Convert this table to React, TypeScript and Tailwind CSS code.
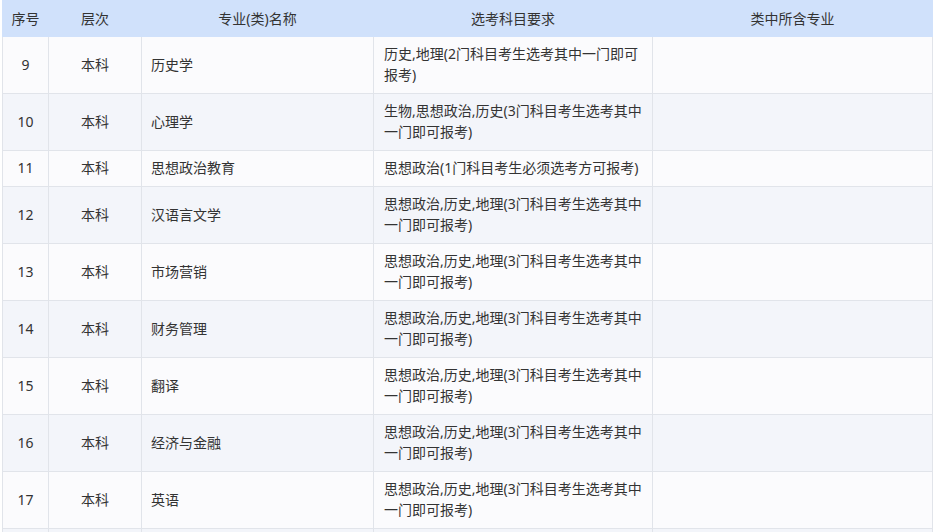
const rows = [
  { no: 9, name: '历史学', req: '历史,地理(2门科目考生选考其中一门即可报考)' },
  { no: 10, name: '心理学', req: '生物,思想政治,历史(3门科目考生选考其中一门即可报考)' },
  { no: 11, name: '思想政治教育', req: '思想政治(1门科目考生必须选考方可报考)' },
  { no: 12, name: '汉语言文学', req: '思想政治,历史,地理(3门科目考生选考其中一门即可报考)' },
  { no: 13, name: '市场营销', req: '思想政治,历史,地理(3门科目考生选考其中一门即可报考)' },
  { no: 14, name: '财务管理', req: '思想政治,历史,地理(3门科目考生选考其中一门即可报考)' },
  { no: 15, name: '翻译', req: '思想政治,历史,地理(3门科目考生选考其中一门即可报考)' },
  { no: 16, name: '经济与金融', req: '思想政治,历史,地理(3门科目考生选考其中一门即可报考)' },
  { no: 17, name: '英语', req: '思想政治,历史,地理(3门科目考生选考其中一门即可报考)' },
];

export default function App() {
  return (
    <div
      className="h-[532px] w-[935px] overflow-hidden bg-white pl-[2px] text-[14px] leading-[21px] text-[#333]"
      style={{ fontFamily: '"Noto Sans", "Noto Sans CJK SC", sans-serif' }}
    >
      <table className="w-[930px] table-fixed border-collapse">
        <colgroup>
          <col className="w-[46px]" />
          <col className="w-[93px]" />
          <col className="w-[232px]" />
          <col className="w-[279px]" />
          <col className="w-[280px]" />
        </colgroup>
        <thead>
          <tr className="h-[36px] bg-[#d0e1fb]">
            <th className="border border-[#d0e1fb] p-0 font-normal">序号</th>
            <th className="border border-[#d0e1fb] p-0 font-normal">层次</th>
            <th className="border border-[#d0e1fb] p-0 font-normal">专业(类)名称</th>
            <th className="border border-[#d0e1fb] p-0 font-normal">选考科目要求</th>
            <th className="border border-[#d0e1fb] p-0 font-normal">类中所含专业</th>
          </tr>
        </thead>
        <tbody>
          {rows.map((r, i) => (
            <tr key={r.no} className={i % 2 === 0 ? 'bg-[#fbfbfd]' : 'bg-[#f3f5fa]'}>
              <td className="border border-[#e1e4ea] pt-[6px] pb-[8px] text-center">{r.no}</td>
              <td className="border border-[#e1e4ea] pt-[6px] pb-[8px] text-center">本科</td>
              <td className="border border-[#e1e4ea] pt-[6px] pb-[8px] pl-[9px]">{r.name}</td>
              <td className="border border-[#e1e4ea] pt-[6px] pb-[8px] pl-[10px] pr-[10px]">{r.req}</td>
              <td className="border border-[#e1e4ea] pt-[6px] pb-[8px]"></td>
            </tr>
          ))}
          <tr className="h-[21px] bg-[#f3f5fa]">
            <td className="border border-[#e1e4ea]"></td>
            <td className="border border-[#e1e4ea]"></td>
            <td className="border border-[#e1e4ea]"></td>
            <td className="border border-[#e1e4ea]"></td>
            <td className="border border-[#e1e4ea]"></td>
          </tr>
        </tbody>
      </table>
    </div>
  );
}
